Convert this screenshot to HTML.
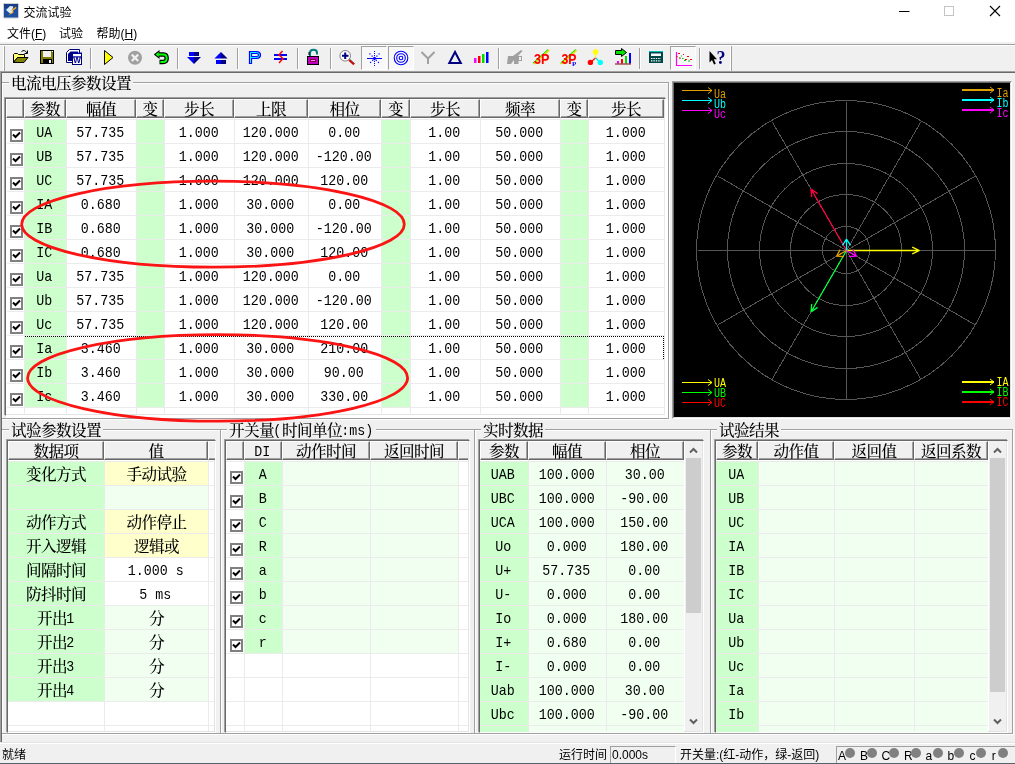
<!DOCTYPE html><html><head><meta charset="utf-8"><title>交流试验</title><style>
*{box-sizing:border-box;margin:0;padding:0}
html,body{width:1015px;height:764px;overflow:hidden;background:#f0f0f0}
body{position:relative;font-family:"Liberation Sans","Noto Sans CJK SC",sans-serif;font-size:12px;color:#000}
div,span,svg{position:absolute}
.ui{font-family:"Liberation Sans","Noto Sans CJK SC",sans-serif;font-size:12px;line-height:18px;white-space:nowrap}
.s{font-family:"Liberation Mono","Noto Serif CJK SC",monospace;font-size:15.6px;letter-spacing:-.6px;line-height:18px;white-space:nowrap;font-weight:500}
.c{text-align:center;font-family:"Liberation Mono","Noto Serif CJK SC",monospace;font-size:15.6px;letter-spacing:-.6px;line-height:18px;white-space:nowrap;font-weight:500;height:18px}
.c i,.s i{position:static;display:inline-block;font-style:normal;font-size:15px;letter-spacing:0;font-weight:400;transform:translate(-.7px,-1px) scaleX(.8889);transform-origin:50% 50%}
.s b{position:static;display:inline-block;font-weight:400;vertical-align:top;height:18px}
.s b i{transform-origin:0 50%}
.h{background:#f0f0f0;border:1px solid;border-color:#fff #696969 #696969 #fff;height:19px;box-shadow:inset -1px -1px 0 #a0a0a0}
.hx{border-right:0;box-shadow:inset 0 -1px 0 #a0a0a0}
.gb{border:1px solid #a0a0a0;box-shadow:1px 1px 0 #fff, inset 1px 1px 0 #fff}
.gt{background:#f0f0f0;padding:0 2px}
.grid{background:#fff;border:1px solid;border-color:#696969 #fff #fff #696969;box-shadow:-1px -1px 0 #a0a0a0,inset -1px -1px 0 #e3e3e3}
.hl{height:1px;background:#ebebeb}
.vl{width:1px;background:#ebebeb}
.cb{width:13px;height:13px;border:2px solid #808080;background:#fff}
.sep{width:2px;border-left:1px solid #a0a0a0;border-right:1px solid #fff;top:48px;height:21px}
.pr{top:46px;height:24px;border:1px solid;border-color:#a0a0a0 #fff #fff #a0a0a0;background:#f8f8f8}
.dot{width:10px;height:10px;border-radius:50%;background:#808080;top:748px}
</style></head><body><div id="root" style="left:0;top:0;width:1015px;height:764px;will-change:transform">
<div style="left:0px;top:0px;width:1015px;height:42px;background:#fff"></div>
<svg style="left:3px;top:3px" width="16" height="16" viewBox="3 3 16 16"><rect x="3.5" y="3.5" width="15" height="14.5" rx="1" fill="#1d4f9f" stroke="#cfcfd4"/><rect x="4" y="4" width="14" height="4" fill="#163f86"/><path d="M6 10 L10 6 L13.5 6.5 L12 10 L13 13 L10 13.5 Z" fill="#dfeaf8"/><path d="M16 6.5 L11 10.5 L12.8 11.2 L8 15.5 L14 12.2 L12 11.5 L16.5 8 Z" fill="#ffa41c"/><path d="M13 9.5 L11.5 10.8 L13 11.3 L10.5 13.5 L13.6 11.8 L12.6 11.3 Z" fill="#ffe45c"/></svg>
<div class="ui" style="left:23.5px;top:4px">交流试验</div>
<svg style="left:890px;top:0" width="125" height="24" viewBox="0 0 125 24"><path d="M9 11.5 H19.5" stroke="#000" stroke-width="1"/><rect x="54.5" y="6.5" width="9" height="9" fill="none" stroke="#c4c4c4"/><path d="M100 6 L110 16 M110 6 L100 16" stroke="#000" stroke-width="1.1"/></svg>
<div class="ui" style="left:7px;top:25px">文件(<u>F</u>)</div>
<div class="ui" style="left:59px;top:25px">试验</div>
<div class="ui" style="left:96.5px;top:25px">帮助(<u>H</u>)</div>
<div style="left:0px;top:44px;width:1015px;height:1px;background:#a0a0a0"></div>
<div style="left:0px;top:45px;width:1015px;height:1px;background:#fff"></div>
<div style="left:0px;top:71px;width:1015px;height:1px;background:#a0a0a0"></div>
<div style="left:1px;top:72px;width:1014px;height:1px;background:#696969"></div>
<div style="left:3px;top:46px;width:2px;height:25px;border-left:1px solid #fff;border-right:1px solid #a0a0a0"></div>
<div class="sep" style="left:90px"></div>
<div class="sep" style="left:177px"></div>
<div class="sep" style="left:237px"></div>
<div class="sep" style="left:297px"></div>
<div class="sep" style="left:330px"></div>
<div class="sep" style="left:498px"></div>
<div class="sep" style="left:639px"></div>
<div class="sep" style="left:699px"></div>
<div style="left:730px;top:46px;width:2px;height:25px;border-left:1px solid #fff;border-right:1px solid #a0a0a0"></div>
<div class="pr" style="left:361px;width:26px"></div>
<div class="pr" style="left:388px;width:26px"></div>
<div class="pr" style="left:670px;width:26px"></div>
<svg style="left:0;top:44px" width="1015" height="28" viewBox="0 44 1015 28" font-family="Liberation Sans, sans-serif">
<!-- open -->
<path d="M13.5 62.5 V54.5 L14.5 53.5 H17.5 L18.5 54.5 H24.5 V57.5 H17.5 Z" fill="#ffff70" stroke="#000"/>
<path d="M13.5 62.5 L17.5 57.5 H28 L24 62.5 Z" fill="#808000" stroke="#000"/>
<path d="M21.5 51.5 Q24.5 49 27 53 M27.5 50.5 V53.5 H24.5" fill="none" stroke="#000"/>
<!-- save -->
<rect x="40.5" y="50.5" width="13" height="13" fill="#808000" stroke="#000"/>
<rect x="43" y="51" width="8" height="6" fill="#f0f0f0"/>
<rect x="43" y="59" width="9" height="5" fill="#000"/>
<rect x="49" y="60" width="2" height="3" fill="#f0f0f0"/>
<rect x="52" y="51" width="1" height="1" fill="#fff"/>
<!-- word -->
<path d="M66.5 52.5 L69.5 49.5 H79.5 V62.5 H66.5 Z" fill="#fff" stroke="#000078"/>
<path d="M68 54 L70.500 51.500 H78 V61 H68 Z" fill="#000084"/>
<rect x="72.500" y="53.500" width="9" height="11" fill="#fff" stroke="#000078"/>
<rect x="72" y="52.500" width="10" height="1.500" fill="#0000a0"/>
<rect x="73" y="56.300" width="8" height="1.200" fill="#0000a0"/>
<text x="73.200" y="63" font-size="8.500" font-weight="bold" fill="#000090" textLength="7.600" lengthAdjust="spacingAndGlyphs">W</text>
<!-- play -->
<path d="M104.5 50.5 L113 57.5 L104.5 64.5 Z" fill="#ffff00" stroke="#000" stroke-width="1"/>
<!-- stop -->
<circle cx="135" cy="57.8" r="7" fill="#a0a0a0"/>
<path d="M131.8 54.6 L138.2 61 M138.2 54.6 L131.8 61" stroke="#f0f0f0" stroke-width="2.2"/>
<!-- undo -->
<path d="M158 54.5 H163.5 Q166.7 54.5 166.7 58.3 Q166.7 62 163 62 H159.5" fill="none" stroke="#000" stroke-width="4.4"/>
<path d="M153.8 54.5 L159.5 50 V59 Z" fill="#000"/>
<path d="M157 54.5 H163.5 Q166.7 54.5 166.7 58.3 Q166.7 62 163 62 H160.3" fill="none" stroke="#00ff00" stroke-width="2"/>
<path d="M155.6 54.5 L158.8 52 V57 Z" fill="#00ff00"/>
<!-- down -->
<rect x="189" y="52" width="5" height="4" fill="#0000ff"/><rect x="194" y="52" width="5" height="4" fill="#000080"/>
<path d="M187 57 H194 V64 Z" fill="#0000ff"/><path d="M194 57 H201 L194 64 Z" fill="#000080"/>
<!-- up -->
<path d="M221 52 V58.6 H214.4 Z" fill="#0000ff"/><path d="M221 52 L227.6 58.6 H221 Z" fill="#000080"/>
<rect x="216" y="60" width="5" height="4" fill="#0000ff"/><rect x="221" y="60" width="5" height="4" fill="#000080"/>
<rect x="221" y="60" width="5" height="1.5" fill="#000080"/>
<!-- P -->
<path d="M250.5 64 V52.5 H256.5 Q259.5 52.5 259.5 55 Q259.5 57.5 256.5 57.5 H251" fill="none" stroke="#0000ff" stroke-width="3.2"/>
<path d="M250.5 63 V52.5 H256.5 Q259.5 52.5 259.5 55 Q259.5 57.5 256.5 57.5 H251" fill="none" stroke="#00ffff" stroke-width="1"/>
<!-- neq -->
<rect x="274" y="54" width="13" height="2" fill="#0000ff"/><rect x="274" y="58" width="13" height="2" fill="#0000ff"/>
<path d="M282.5 51 L279 55 L283 58.5 L279 63" fill="none" stroke="#ff0000" stroke-width="1.5"/>
<!-- lock -->
<path d="M310 56 V53 Q310 49.8 313.5 49.8 Q317 49.8 317 53 V54.5" fill="none" stroke="#008080" stroke-width="2"/>
<path d="M309 52 V55" stroke="#000" stroke-width="1"/>
<rect x="307.5" y="56.5" width="11" height="8" fill="#c000c0" stroke="#000"/>
<rect x="310" y="59" width="6" height="3" fill="#800040"/>
<rect x="311" y="60" width="4" height="1" fill="#ff80ff"/>
<!-- magnifier -->
<circle cx="345.2" cy="55.8" r="5.3" fill="#fff" stroke="#808080"/>
<path d="M342 55.8 H348.5 M345.2 52.5 V59" stroke="#000080" stroke-width="2"/>
<path d="M349 60 L354 64.5" stroke="#e00000" stroke-width="1.8"/>
<path d="M349.5 59 L354.8 63.8" stroke="#404040" stroke-width=".8"/>
<!-- star -->
<path d="M367 58.5 H382" stroke="#0000ff" stroke-width="1"/>
<path d="M374.5 51 V66" stroke="#0000ff" stroke-width="1" stroke-dasharray="1 1"/>
<path d="M369.5 53.5 L379.5 63.5 M379.5 53.5 L369.5 63.5" stroke="#0000ff" stroke-width="1.2" stroke-dasharray="1.2 1.8"/>
<circle cx="374.5" cy="58.5" r="1.3" fill="none" stroke="#0000ff" stroke-width=".8"/>
<!-- circles -->
<circle cx="401" cy="58" r="6.8" fill="none" stroke="#0000ff" stroke-width="1.1"/>
<circle cx="401" cy="58" r="4.3" fill="none" stroke="#0000ff" stroke-width="1.1"/>
<circle cx="401" cy="58" r="1.8" fill="none" stroke="#0000ff" stroke-width="1.1"/>
<!-- Y -->
<path d="M421.5 52 L428 58.5 L434.5 52 M428 58.5 V64" fill="none" stroke="#a0a0a0" stroke-width="2"/>
<!-- delta -->
<path d="M455 52 L449.3 63 H460.8 Z" fill="none" stroke="#000080" stroke-width="2"/>
<!-- bars -->
<rect x="474" y="58" width="2.5" height="5" fill="#ff00ff"/><rect x="478" y="56" width="2.5" height="7" fill="#ff0000"/>
<rect x="482" y="54" width="2.5" height="9" fill="#00e000"/><rect x="486" y="52" width="2.5" height="11" fill="#0000ff"/>
<!-- gray disabled -->
<path d="M508 56 H513 L521 50 L522.5 51 L518 56 H522 V61 H518.5 V64 H514 V60 L511 64 H507 Z" fill="#a0a0a0"/>
<rect x="519" y="57" width="2" height="3" fill="#f0f0f0"/>
<!-- 3P -->
<path d="M533.5 64 L549 50" stroke="#e0e000" stroke-width="2"/><path d="M533 63 L548 49.5" stroke="#00e000" stroke-width="1"/>
<text x="534" y="63.5" font-size="14.5" font-weight="bold" fill="#ff0000" textLength="15.5" lengthAdjust="spacingAndGlyphs">3P</text>
<path d="M561 64 L576.5 50" stroke="#e0e000" stroke-width="2"/><path d="M560.5 63 L575.5 49.5" stroke="#00e000" stroke-width="1"/>
<text x="561.5" y="63.5" font-size="14.5" font-weight="bold" fill="#ff0000" textLength="15" lengthAdjust="spacingAndGlyphs">3P</text>
<text x="572" y="66" font-size="7" font-weight="bold" fill="#0000ff" font-family="Liberation Serif, serif">P</text>
<!-- molecule -->
<path d="M595.6 52 V58" stroke="#ffff00" stroke-width="1.2"/><path d="M595.6 58 L590.4 62.4" stroke="#ff0000" stroke-width="1.2"/><path d="M595.6 58 L600.3 62.4" stroke="#00e0e0" stroke-width="1.2"/>
<circle cx="595.6" cy="52" r="2.7" fill="#ffff00"/><circle cx="590.4" cy="62.4" r="2.7" fill="#ff0000"/><circle cx="600.3" cy="62.4" r="2.7" fill="#00ffff"/>
<!-- bars with arrow -->
<path d="M615.5 50.5 H621.5 V48.5 L626.5 52.5 L621.5 56.5 V54.5 H615.5 Z" fill="#00e000" stroke="#000"/>
<rect x="617" y="61" width="2" height="2.5" fill="#ff00ff"/><rect x="621" y="59" width="2" height="4.5" fill="#ff0000"/>
<rect x="625" y="56" width="2" height="7.5" fill="#00e000"/><rect x="629" y="53" width="2" height="10.5" fill="#0000ff"/>
<rect x="615" y="63.5" width="16" height="1" fill="#800000"/>
<!-- calc -->
<rect x="649" y="51" width="14" height="12" fill="#004848"/>
<rect x="649" y="51" width="14" height="1" fill="#00c0c0"/>
<rect x="651" y="53.5" width="10" height="2.5" fill="#fff"/>
<path d="M651 58.5 H661 M651 60.8 H661" stroke="#fff" stroke-width="1.2" stroke-dasharray="1.4 1"/>
<!-- chart -->
<path d="M676.5 52 V65.5 H692" fill="none" stroke="#ff00ff" stroke-width="1.2"/>
<path d="M678 53.5 H680 M683 54.5 H684 M687 56.5 H689 M685 59.5 H687 M690 59.5 H692 M677 56 V57.5 M680 57.5 V59" stroke="#ff0000" stroke-width="1"/>
<path d="M679 58 H680.5 M682 58.5 H683.5 M684 60.5 H686 M688 61 H690 M681 56 H682" stroke="#00c000" stroke-width="1"/>
<!-- help pointer -->
<path d="M709.5 51 V62.5 L712 60 L714 64.5 L715.8 63.7 L713.8 59.3 H717 Z" fill="#000"/>
<text x="716.5" y="64" font-size="18" font-weight="bold" fill="#000080" font-family="Liberation Serif, serif">?</text>
</svg>

<div class="gb" style="left:1px;top:82px;width:668px;height:337px;"></div>
<div class="s gt" style="left:9px;top:76px">电流电压参数设置</div>
<div class="gb" style="left:1px;top:429px;width:220px;height:305px;"></div>
<div class="s gt" style="left:9px;top:423px">试验参数设置</div>
<div class="gb" style="left:220px;top:429px;width:255px;height:305px;"></div>
<div class="s gt" style="left:227px;top:423px">开关量<b style="width:8px"><i>(</i></b>时间单位<b style="width:32px"><i>:ms)</i></b></div>
<div class="gb" style="left:474px;top:429px;width:237px;height:305px;"></div>
<div class="s gt" style="left:481px;top:423px">实时数据</div>
<div class="gb" style="left:710px;top:429px;width:303px;height:305px;"></div>
<div class="s gt" style="left:717px;top:423px">试验结果</div>
<div style="left:0px;top:72px;width:1px;height:671px;background:#a0a0a0"></div>
<div style="left:1px;top:72px;width:1px;height:671px;background:#696969"></div>
<div style="left:6px;top:99px;width:662px;height:319px;background:#fff"></div>
<div class="grid" style="left:5px;top:98px;width:661px;height:318px;"></div>
<div class="h c" style="left:6px;top:99px;width:18px;line-height:22px"></div>
<div class="h c" style="left:24px;top:99px;width:42px;line-height:22px">参数</div>
<div class="h c" style="left:66px;top:99px;width:70px;line-height:22px">幅值</div>
<div class="h c" style="left:136px;top:99px;width:28px;line-height:22px">变</div>
<div class="h c" style="left:164px;top:99px;width:70px;line-height:22px">步长</div>
<div class="h c" style="left:234px;top:99px;width:74px;line-height:22px">上限</div>
<div class="h c" style="left:308px;top:99px;width:73px;line-height:22px">相位</div>
<div class="h c" style="left:381px;top:99px;width:29px;line-height:22px">变</div>
<div class="h c" style="left:410px;top:99px;width:70px;line-height:22px">步长</div>
<div class="h c" style="left:480px;top:99px;width:80px;line-height:22px">频率</div>
<div class="h c" style="left:560px;top:99px;width:28px;line-height:22px">变</div>
<div class="h c" style="left:588px;top:99px;width:76px;line-height:22px">步长</div>
<div style="left:25px;top:120px;width:41px;height:287px;background:#ccffcc"></div>
<div style="left:137px;top:120px;width:27px;height:287px;background:#ccffcc"></div>
<div style="left:382px;top:120px;width:28px;height:287px;background:#ccffcc"></div>
<div style="left:561px;top:120px;width:27px;height:287px;background:#ccffcc"></div>
<div class="hl" style="left:7px;top:119px;width:657px;height:1px;"></div>
<div class="hl" style="left:7px;top:143px;width:657px;height:1px;"></div>
<div class="hl" style="left:7px;top:167px;width:657px;height:1px;"></div>
<div class="hl" style="left:7px;top:191px;width:657px;height:1px;"></div>
<div class="hl" style="left:7px;top:215px;width:657px;height:1px;"></div>
<div class="hl" style="left:7px;top:239px;width:657px;height:1px;"></div>
<div class="hl" style="left:7px;top:263px;width:657px;height:1px;"></div>
<div class="hl" style="left:7px;top:287px;width:657px;height:1px;"></div>
<div class="hl" style="left:7px;top:311px;width:657px;height:1px;"></div>
<div class="hl" style="left:7px;top:335px;width:657px;height:1px;"></div>
<div class="hl" style="left:7px;top:359px;width:657px;height:1px;"></div>
<div class="hl" style="left:7px;top:383px;width:657px;height:1px;"></div>
<div class="hl" style="left:7px;top:407px;width:657px;height:1px;"></div>
<div class="vl" style="left:24px;top:118px;width:1px;height:297px;"></div>
<div class="vl" style="left:66px;top:118px;width:1px;height:297px;"></div>
<div class="vl" style="left:136px;top:118px;width:1px;height:297px;"></div>
<div class="vl" style="left:164px;top:118px;width:1px;height:297px;"></div>
<div class="vl" style="left:234px;top:118px;width:1px;height:297px;"></div>
<div class="vl" style="left:308px;top:118px;width:1px;height:297px;"></div>
<div class="vl" style="left:381px;top:118px;width:1px;height:297px;"></div>
<div class="vl" style="left:410px;top:118px;width:1px;height:297px;"></div>
<div class="vl" style="left:480px;top:118px;width:1px;height:297px;"></div>
<div class="vl" style="left:560px;top:118px;width:1px;height:297px;"></div>
<div class="vl" style="left:588px;top:118px;width:1px;height:297px;"></div>
<div class="vl" style="left:664px;top:118px;width:1px;height:297px;"></div>
<div class="cb" style="left:10px;top:129px"><svg style="left:0;top:0" width="9" height="9" viewBox="0 0 9 9"><path d="M1 3.5 L3.5 6 L8 1.5" stroke="#000" stroke-width="2" fill="none"/></svg></div>
<div class="c" style="left:25px;top:125px;width:41px"><i>UA</i></div>
<div class="c" style="left:67px;top:125px;width:69px"><i>57.735</i></div>
<div class="c" style="left:165px;top:125px;width:69px"><i>1.000</i></div>
<div class="c" style="left:235px;top:125px;width:73px"><i>120.000</i></div>
<div class="c" style="left:309px;top:125px;width:72px"><i>0.00</i></div>
<div class="c" style="left:411px;top:125px;width:69px"><i>1.00</i></div>
<div class="c" style="left:481px;top:125px;width:79px"><i>50.000</i></div>
<div class="c" style="left:589px;top:125px;width:75px"><i>1.000</i></div>
<div class="cb" style="left:10px;top:153px"><svg style="left:0;top:0" width="9" height="9" viewBox="0 0 9 9"><path d="M1 3.5 L3.5 6 L8 1.5" stroke="#000" stroke-width="2" fill="none"/></svg></div>
<div class="c" style="left:25px;top:149px;width:41px"><i>UB</i></div>
<div class="c" style="left:67px;top:149px;width:69px"><i>57.735</i></div>
<div class="c" style="left:165px;top:149px;width:69px"><i>1.000</i></div>
<div class="c" style="left:235px;top:149px;width:73px"><i>120.000</i></div>
<div class="c" style="left:309px;top:149px;width:72px"><i>-120.00</i></div>
<div class="c" style="left:411px;top:149px;width:69px"><i>1.00</i></div>
<div class="c" style="left:481px;top:149px;width:79px"><i>50.000</i></div>
<div class="c" style="left:589px;top:149px;width:75px"><i>1.000</i></div>
<div class="cb" style="left:10px;top:177px"><svg style="left:0;top:0" width="9" height="9" viewBox="0 0 9 9"><path d="M1 3.5 L3.5 6 L8 1.5" stroke="#000" stroke-width="2" fill="none"/></svg></div>
<div class="c" style="left:25px;top:173px;width:41px"><i>UC</i></div>
<div class="c" style="left:67px;top:173px;width:69px"><i>57.735</i></div>
<div class="c" style="left:165px;top:173px;width:69px"><i>1.000</i></div>
<div class="c" style="left:235px;top:173px;width:73px"><i>120.000</i></div>
<div class="c" style="left:309px;top:173px;width:72px"><i>120.00</i></div>
<div class="c" style="left:411px;top:173px;width:69px"><i>1.00</i></div>
<div class="c" style="left:481px;top:173px;width:79px"><i>50.000</i></div>
<div class="c" style="left:589px;top:173px;width:75px"><i>1.000</i></div>
<div class="cb" style="left:10px;top:201px"><svg style="left:0;top:0" width="9" height="9" viewBox="0 0 9 9"><path d="M1 3.5 L3.5 6 L8 1.5" stroke="#000" stroke-width="2" fill="none"/></svg></div>
<div class="c" style="left:25px;top:197px;width:41px"><i>IA</i></div>
<div class="c" style="left:67px;top:197px;width:69px"><i>0.680</i></div>
<div class="c" style="left:165px;top:197px;width:69px"><i>1.000</i></div>
<div class="c" style="left:235px;top:197px;width:73px"><i>30.000</i></div>
<div class="c" style="left:309px;top:197px;width:72px"><i>0.00</i></div>
<div class="c" style="left:411px;top:197px;width:69px"><i>1.00</i></div>
<div class="c" style="left:481px;top:197px;width:79px"><i>50.000</i></div>
<div class="c" style="left:589px;top:197px;width:75px"><i>1.000</i></div>
<div class="cb" style="left:10px;top:225px"><svg style="left:0;top:0" width="9" height="9" viewBox="0 0 9 9"><path d="M1 3.5 L3.5 6 L8 1.5" stroke="#000" stroke-width="2" fill="none"/></svg></div>
<div class="c" style="left:25px;top:221px;width:41px"><i>IB</i></div>
<div class="c" style="left:67px;top:221px;width:69px"><i>0.680</i></div>
<div class="c" style="left:165px;top:221px;width:69px"><i>1.000</i></div>
<div class="c" style="left:235px;top:221px;width:73px"><i>30.000</i></div>
<div class="c" style="left:309px;top:221px;width:72px"><i>-120.00</i></div>
<div class="c" style="left:411px;top:221px;width:69px"><i>1.00</i></div>
<div class="c" style="left:481px;top:221px;width:79px"><i>50.000</i></div>
<div class="c" style="left:589px;top:221px;width:75px"><i>1.000</i></div>
<div class="cb" style="left:10px;top:249px"><svg style="left:0;top:0" width="9" height="9" viewBox="0 0 9 9"><path d="M1 3.5 L3.5 6 L8 1.5" stroke="#000" stroke-width="2" fill="none"/></svg></div>
<div class="c" style="left:25px;top:245px;width:41px"><i>IC</i></div>
<div class="c" style="left:67px;top:245px;width:69px"><i>0.680</i></div>
<div class="c" style="left:165px;top:245px;width:69px"><i>1.000</i></div>
<div class="c" style="left:235px;top:245px;width:73px"><i>30.000</i></div>
<div class="c" style="left:309px;top:245px;width:72px"><i>120.00</i></div>
<div class="c" style="left:411px;top:245px;width:69px"><i>1.00</i></div>
<div class="c" style="left:481px;top:245px;width:79px"><i>50.000</i></div>
<div class="c" style="left:589px;top:245px;width:75px"><i>1.000</i></div>
<div class="cb" style="left:10px;top:273px"><svg style="left:0;top:0" width="9" height="9" viewBox="0 0 9 9"><path d="M1 3.5 L3.5 6 L8 1.5" stroke="#000" stroke-width="2" fill="none"/></svg></div>
<div class="c" style="left:25px;top:269px;width:41px"><i>Ua</i></div>
<div class="c" style="left:67px;top:269px;width:69px"><i>57.735</i></div>
<div class="c" style="left:165px;top:269px;width:69px"><i>1.000</i></div>
<div class="c" style="left:235px;top:269px;width:73px"><i>120.000</i></div>
<div class="c" style="left:309px;top:269px;width:72px"><i>0.00</i></div>
<div class="c" style="left:411px;top:269px;width:69px"><i>1.00</i></div>
<div class="c" style="left:481px;top:269px;width:79px"><i>50.000</i></div>
<div class="c" style="left:589px;top:269px;width:75px"><i>1.000</i></div>
<div class="cb" style="left:10px;top:297px"><svg style="left:0;top:0" width="9" height="9" viewBox="0 0 9 9"><path d="M1 3.5 L3.5 6 L8 1.5" stroke="#000" stroke-width="2" fill="none"/></svg></div>
<div class="c" style="left:25px;top:293px;width:41px"><i>Ub</i></div>
<div class="c" style="left:67px;top:293px;width:69px"><i>57.735</i></div>
<div class="c" style="left:165px;top:293px;width:69px"><i>1.000</i></div>
<div class="c" style="left:235px;top:293px;width:73px"><i>120.000</i></div>
<div class="c" style="left:309px;top:293px;width:72px"><i>-120.00</i></div>
<div class="c" style="left:411px;top:293px;width:69px"><i>1.00</i></div>
<div class="c" style="left:481px;top:293px;width:79px"><i>50.000</i></div>
<div class="c" style="left:589px;top:293px;width:75px"><i>1.000</i></div>
<div class="cb" style="left:10px;top:321px"><svg style="left:0;top:0" width="9" height="9" viewBox="0 0 9 9"><path d="M1 3.5 L3.5 6 L8 1.5" stroke="#000" stroke-width="2" fill="none"/></svg></div>
<div class="c" style="left:25px;top:317px;width:41px"><i>Uc</i></div>
<div class="c" style="left:67px;top:317px;width:69px"><i>57.735</i></div>
<div class="c" style="left:165px;top:317px;width:69px"><i>1.000</i></div>
<div class="c" style="left:235px;top:317px;width:73px"><i>120.000</i></div>
<div class="c" style="left:309px;top:317px;width:72px"><i>120.00</i></div>
<div class="c" style="left:411px;top:317px;width:69px"><i>1.00</i></div>
<div class="c" style="left:481px;top:317px;width:79px"><i>50.000</i></div>
<div class="c" style="left:589px;top:317px;width:75px"><i>1.000</i></div>
<div class="cb" style="left:10px;top:345px"><svg style="left:0;top:0" width="9" height="9" viewBox="0 0 9 9"><path d="M1 3.5 L3.5 6 L8 1.5" stroke="#000" stroke-width="2" fill="none"/></svg></div>
<div class="c" style="left:25px;top:341px;width:41px"><i>Ia</i></div>
<div class="c" style="left:67px;top:341px;width:69px"><i>3.460</i></div>
<div class="c" style="left:165px;top:341px;width:69px"><i>1.000</i></div>
<div class="c" style="left:235px;top:341px;width:73px"><i>30.000</i></div>
<div class="c" style="left:309px;top:341px;width:72px"><i>210.00</i></div>
<div class="c" style="left:411px;top:341px;width:69px"><i>1.00</i></div>
<div class="c" style="left:481px;top:341px;width:79px"><i>50.000</i></div>
<div class="c" style="left:589px;top:341px;width:75px"><i>1.000</i></div>
<div class="cb" style="left:10px;top:369px"><svg style="left:0;top:0" width="9" height="9" viewBox="0 0 9 9"><path d="M1 3.5 L3.5 6 L8 1.5" stroke="#000" stroke-width="2" fill="none"/></svg></div>
<div class="c" style="left:25px;top:365px;width:41px"><i>Ib</i></div>
<div class="c" style="left:67px;top:365px;width:69px"><i>3.460</i></div>
<div class="c" style="left:165px;top:365px;width:69px"><i>1.000</i></div>
<div class="c" style="left:235px;top:365px;width:73px"><i>30.000</i></div>
<div class="c" style="left:309px;top:365px;width:72px"><i>90.00</i></div>
<div class="c" style="left:411px;top:365px;width:69px"><i>1.00</i></div>
<div class="c" style="left:481px;top:365px;width:79px"><i>50.000</i></div>
<div class="c" style="left:589px;top:365px;width:75px"><i>1.000</i></div>
<div class="cb" style="left:10px;top:393px"><svg style="left:0;top:0" width="9" height="9" viewBox="0 0 9 9"><path d="M1 3.5 L3.5 6 L8 1.5" stroke="#000" stroke-width="2" fill="none"/></svg></div>
<div class="c" style="left:25px;top:389px;width:41px"><i>Ic</i></div>
<div class="c" style="left:67px;top:389px;width:69px"><i>3.460</i></div>
<div class="c" style="left:165px;top:389px;width:69px"><i>1.000</i></div>
<div class="c" style="left:235px;top:389px;width:73px"><i>30.000</i></div>
<div class="c" style="left:309px;top:389px;width:72px"><i>330.00</i></div>
<div class="c" style="left:411px;top:389px;width:69px"><i>1.00</i></div>
<div class="c" style="left:481px;top:389px;width:79px"><i>50.000</i></div>
<div class="c" style="left:589px;top:389px;width:75px"><i>1.000</i></div>
<div style="left:25px;top:336px;width:639px;height:1px;background:repeating-linear-gradient(90deg,#000 0 1px,transparent 1px 2px)"></div>
<div style="left:663px;top:336px;width:1px;height:23px;background:repeating-linear-gradient(180deg,#000 0 1px,transparent 1px 2px)"></div>
<div class="grid" style="left:7px;top:440px;width:209px;height:293px;"></div>
<div class="h c" style="left:8px;top:441px;width:96px;line-height:22px">数据项</div>
<div class="h c" style="left:104px;top:441px;width:104px;line-height:22px">值</div>
<div class="h c hx" style="left:208px;top:441px;width:7px;line-height:22px"></div>
<div style="left:8px;top:462px;width:96px;height:239px;background:#ccffcc"></div>
<div style="left:105px;top:462px;width:103px;height:23px;background:#ffffcc"></div>
<div style="left:105px;top:486px;width:103px;height:23px;background:#f0fff0"></div>
<div style="left:105px;top:510px;width:103px;height:23px;background:#ffffcc"></div>
<div style="left:105px;top:534px;width:103px;height:23px;background:#ffffcc"></div>
<div style="left:105px;top:606px;width:103px;height:23px;background:#f0fff0"></div>
<div style="left:105px;top:630px;width:103px;height:23px;background:#f0fff0"></div>
<div style="left:105px;top:654px;width:103px;height:23px;background:#f0fff0"></div>
<div style="left:105px;top:678px;width:103px;height:23px;background:#f0fff0"></div>
<div class="hl" style="left:8px;top:461px;width:206px;height:1px;"></div>
<div class="hl" style="left:8px;top:485px;width:206px;height:1px;"></div>
<div class="hl" style="left:8px;top:509px;width:206px;height:1px;"></div>
<div class="hl" style="left:8px;top:533px;width:206px;height:1px;"></div>
<div class="hl" style="left:8px;top:557px;width:206px;height:1px;"></div>
<div class="hl" style="left:8px;top:581px;width:206px;height:1px;"></div>
<div class="hl" style="left:8px;top:605px;width:206px;height:1px;"></div>
<div class="hl" style="left:8px;top:629px;width:206px;height:1px;"></div>
<div class="hl" style="left:8px;top:653px;width:206px;height:1px;"></div>
<div class="hl" style="left:8px;top:677px;width:206px;height:1px;"></div>
<div class="hl" style="left:8px;top:701px;width:206px;height:1px;"></div>
<div class="hl" style="left:8px;top:725px;width:206px;height:1px;"></div>
<div class="vl" style="left:104px;top:460px;width:1px;height:271px;"></div>
<div class="vl" style="left:208px;top:460px;width:1px;height:271px;"></div>
<div class="c" style="left:8px;top:467px;width:96px">变化方式</div>
<div class="c" style="left:105px;top:467px;width:103px">手动试验</div>
<div class="c" style="left:8px;top:515px;width:96px">动作方式</div>
<div class="c" style="left:105px;top:515px;width:103px">动作停止</div>
<div class="c" style="left:8px;top:539px;width:96px">开入逻辑</div>
<div class="c" style="left:105px;top:539px;width:103px">逻辑或</div>
<div class="c" style="left:8px;top:563px;width:96px">间隔时间</div>
<div class="c" style="left:105px;top:563px;width:103px"><i>1.000 s</i></div>
<div class="c" style="left:8px;top:587px;width:96px">防抖时间</div>
<div class="c" style="left:105px;top:587px;width:103px"><i>5 ms</i></div>
<div class="c s" style="left:8px;top:611px;width:96px">开出<b style="width:8px"><i>1</i></b></div>
<div class="c" style="left:105px;top:611px;width:103px">分</div>
<div class="c s" style="left:8px;top:635px;width:96px">开出<b style="width:8px"><i>2</i></b></div>
<div class="c" style="left:105px;top:635px;width:103px">分</div>
<div class="c s" style="left:8px;top:659px;width:96px">开出<b style="width:8px"><i>3</i></b></div>
<div class="c" style="left:105px;top:659px;width:103px">分</div>
<div class="c s" style="left:8px;top:683px;width:96px">开出<b style="width:8px"><i>4</i></b></div>
<div class="c" style="left:105px;top:683px;width:103px">分</div>
<div class="grid" style="left:225px;top:440px;width:245px;height:293px;"></div>
<div class="h c" style="left:226px;top:441px;width:18px;line-height:22px"></div>
<div class="h c" style="left:244px;top:441px;width:38px;line-height:22px"><i>DI</i></div>
<div class="h c" style="left:282px;top:441px;width:88px;line-height:22px">动作时间</div>
<div class="h c" style="left:370px;top:441px;width:88px;line-height:22px">返回时间</div>
<div class="h c hx" style="left:458px;top:441px;width:10px;line-height:22px"></div>
<div style="left:245px;top:462px;width:37px;height:191px;background:#ccffcc"></div>
<div style="left:283px;top:462px;width:175px;height:191px;background:#f0fff0"></div>
<div class="hl" style="left:226px;top:461px;width:242px;height:1px;"></div>
<div class="hl" style="left:226px;top:485px;width:242px;height:1px;"></div>
<div class="hl" style="left:226px;top:509px;width:242px;height:1px;"></div>
<div class="hl" style="left:226px;top:533px;width:242px;height:1px;"></div>
<div class="hl" style="left:226px;top:557px;width:242px;height:1px;"></div>
<div class="hl" style="left:226px;top:581px;width:242px;height:1px;"></div>
<div class="hl" style="left:226px;top:605px;width:242px;height:1px;"></div>
<div class="hl" style="left:226px;top:629px;width:242px;height:1px;"></div>
<div class="hl" style="left:226px;top:653px;width:242px;height:1px;"></div>
<div class="hl" style="left:226px;top:677px;width:242px;height:1px;"></div>
<div class="hl" style="left:226px;top:701px;width:242px;height:1px;"></div>
<div class="hl" style="left:226px;top:725px;width:242px;height:1px;"></div>
<div class="vl" style="left:244px;top:460px;width:1px;height:271px;"></div>
<div class="vl" style="left:282px;top:460px;width:1px;height:271px;"></div>
<div class="vl" style="left:370px;top:460px;width:1px;height:271px;"></div>
<div class="vl" style="left:458px;top:460px;width:1px;height:271px;"></div>
<div class="c" style="left:245px;top:467px;width:37px"><i>A</i></div>
<div class="cb" style="left:230px;top:471px"><svg style="left:0;top:0" width="9" height="9" viewBox="0 0 9 9"><path d="M1 3.5 L3.5 6 L8 1.5" stroke="#000" stroke-width="2" fill="none"/></svg></div>
<div class="c" style="left:245px;top:491px;width:37px"><i>B</i></div>
<div class="cb" style="left:230px;top:495px"><svg style="left:0;top:0" width="9" height="9" viewBox="0 0 9 9"><path d="M1 3.5 L3.5 6 L8 1.5" stroke="#000" stroke-width="2" fill="none"/></svg></div>
<div class="c" style="left:245px;top:515px;width:37px"><i>C</i></div>
<div class="cb" style="left:230px;top:519px"><svg style="left:0;top:0" width="9" height="9" viewBox="0 0 9 9"><path d="M1 3.5 L3.5 6 L8 1.5" stroke="#000" stroke-width="2" fill="none"/></svg></div>
<div class="c" style="left:245px;top:539px;width:37px"><i>R</i></div>
<div class="cb" style="left:230px;top:543px"><svg style="left:0;top:0" width="9" height="9" viewBox="0 0 9 9"><path d="M1 3.5 L3.5 6 L8 1.5" stroke="#000" stroke-width="2" fill="none"/></svg></div>
<div class="c" style="left:245px;top:563px;width:37px"><i>a</i></div>
<div class="cb" style="left:230px;top:567px"><svg style="left:0;top:0" width="9" height="9" viewBox="0 0 9 9"><path d="M1 3.5 L3.5 6 L8 1.5" stroke="#000" stroke-width="2" fill="none"/></svg></div>
<div class="c" style="left:245px;top:587px;width:37px"><i>b</i></div>
<div class="cb" style="left:230px;top:591px"><svg style="left:0;top:0" width="9" height="9" viewBox="0 0 9 9"><path d="M1 3.5 L3.5 6 L8 1.5" stroke="#000" stroke-width="2" fill="none"/></svg></div>
<div class="c" style="left:245px;top:611px;width:37px"><i>c</i></div>
<div class="cb" style="left:230px;top:615px"><svg style="left:0;top:0" width="9" height="9" viewBox="0 0 9 9"><path d="M1 3.5 L3.5 6 L8 1.5" stroke="#000" stroke-width="2" fill="none"/></svg></div>
<div class="c" style="left:245px;top:635px;width:37px"><i>r</i></div>
<div class="cb" style="left:230px;top:639px"><svg style="left:0;top:0" width="9" height="9" viewBox="0 0 9 9"><path d="M1 3.5 L3.5 6 L8 1.5" stroke="#000" stroke-width="2" fill="none"/></svg></div>
<div class="grid" style="left:479px;top:440px;width:225px;height:293px;"></div>
<div class="h c" style="left:480px;top:441px;width:48px;line-height:22px">参数</div>
<div class="h c" style="left:528px;top:441px;width:78px;line-height:22px">幅值</div>
<div class="h c" style="left:606px;top:441px;width:78px;line-height:22px">相位</div>
<div style="left:480px;top:462px;width:48px;height:270px;background:#ccffcc"></div>
<div style="left:529px;top:462px;width:155px;height:270px;background:#f0fff0"></div>
<div class="hl" style="left:480px;top:461px;width:204px;height:1px;"></div>
<div class="hl" style="left:480px;top:485px;width:204px;height:1px;"></div>
<div class="hl" style="left:480px;top:509px;width:204px;height:1px;"></div>
<div class="hl" style="left:480px;top:533px;width:204px;height:1px;"></div>
<div class="hl" style="left:480px;top:557px;width:204px;height:1px;"></div>
<div class="hl" style="left:480px;top:581px;width:204px;height:1px;"></div>
<div class="hl" style="left:480px;top:605px;width:204px;height:1px;"></div>
<div class="hl" style="left:480px;top:629px;width:204px;height:1px;"></div>
<div class="hl" style="left:480px;top:653px;width:204px;height:1px;"></div>
<div class="hl" style="left:480px;top:677px;width:204px;height:1px;"></div>
<div class="hl" style="left:480px;top:701px;width:204px;height:1px;"></div>
<div class="hl" style="left:480px;top:725px;width:204px;height:1px;"></div>
<div class="vl" style="left:528px;top:460px;width:1px;height:271px;"></div>
<div class="vl" style="left:606px;top:460px;width:1px;height:271px;"></div>
<div class="c" style="left:480px;top:467px;width:48px"><i>UAB</i></div>
<div class="c" style="left:529px;top:467px;width:77px"><i>100.000</i></div>
<div class="c" style="left:607px;top:467px;width:77px"><i>30.00</i></div>
<div class="c" style="left:480px;top:491px;width:48px"><i>UBC</i></div>
<div class="c" style="left:529px;top:491px;width:77px"><i>100.000</i></div>
<div class="c" style="left:607px;top:491px;width:77px"><i>-90.00</i></div>
<div class="c" style="left:480px;top:515px;width:48px"><i>UCA</i></div>
<div class="c" style="left:529px;top:515px;width:77px"><i>100.000</i></div>
<div class="c" style="left:607px;top:515px;width:77px"><i>150.00</i></div>
<div class="c" style="left:480px;top:539px;width:48px"><i>Uo</i></div>
<div class="c" style="left:529px;top:539px;width:77px"><i>0.000</i></div>
<div class="c" style="left:607px;top:539px;width:77px"><i>180.00</i></div>
<div class="c" style="left:480px;top:563px;width:48px"><i>U+</i></div>
<div class="c" style="left:529px;top:563px;width:77px"><i>57.735</i></div>
<div class="c" style="left:607px;top:563px;width:77px"><i>0.00</i></div>
<div class="c" style="left:480px;top:587px;width:48px"><i>U-</i></div>
<div class="c" style="left:529px;top:587px;width:77px"><i>0.000</i></div>
<div class="c" style="left:607px;top:587px;width:77px"><i>0.00</i></div>
<div class="c" style="left:480px;top:611px;width:48px"><i>Io</i></div>
<div class="c" style="left:529px;top:611px;width:77px"><i>0.000</i></div>
<div class="c" style="left:607px;top:611px;width:77px"><i>180.00</i></div>
<div class="c" style="left:480px;top:635px;width:48px"><i>I+</i></div>
<div class="c" style="left:529px;top:635px;width:77px"><i>0.680</i></div>
<div class="c" style="left:607px;top:635px;width:77px"><i>0.00</i></div>
<div class="c" style="left:480px;top:659px;width:48px"><i>I-</i></div>
<div class="c" style="left:529px;top:659px;width:77px"><i>0.000</i></div>
<div class="c" style="left:607px;top:659px;width:77px"><i>0.00</i></div>
<div class="c" style="left:480px;top:683px;width:48px"><i>Uab</i></div>
<div class="c" style="left:529px;top:683px;width:77px"><i>100.000</i></div>
<div class="c" style="left:607px;top:683px;width:77px"><i>30.00</i></div>
<div class="c" style="left:480px;top:707px;width:48px"><i>Ubc</i></div>
<div class="c" style="left:529px;top:707px;width:77px"><i>100.000</i></div>
<div class="c" style="left:607px;top:707px;width:77px"><i>-90.00</i></div>
<div style="left:685px;top:441px;width:17px;height:290px;background:#f0f0f0"></div>
<div style="left:686px;top:458px;width:15px;height:155px;background:#cdcdcd"></div>
<svg style="left:685px;top:441px" width="17" height="290" viewBox="0 0 17 290"><path d="M5 11.5 L8.5 8 L12 11.5" stroke="#606060" stroke-width="2" fill="none"/><path d="M5 278.5 L8.5 282 L12 278.5" stroke="#606060" stroke-width="2" fill="none"/></svg>
<div class="grid" style="left:715px;top:440px;width:293px;height:293px;"></div>
<div class="h c" style="left:716px;top:441px;width:42px;line-height:22px">参数</div>
<div class="h c" style="left:758px;top:441px;width:76px;line-height:22px">动作值</div>
<div class="h c" style="left:834px;top:441px;width:80px;line-height:22px">返回值</div>
<div class="h c" style="left:914px;top:441px;width:74px;line-height:22px">返回系数</div>
<div style="left:716px;top:462px;width:42px;height:270px;background:#ccffcc"></div>
<div style="left:759px;top:462px;width:229px;height:270px;background:#f0fff0"></div>
<div class="hl" style="left:716px;top:461px;width:272px;height:1px;"></div>
<div class="hl" style="left:716px;top:485px;width:272px;height:1px;"></div>
<div class="hl" style="left:716px;top:509px;width:272px;height:1px;"></div>
<div class="hl" style="left:716px;top:533px;width:272px;height:1px;"></div>
<div class="hl" style="left:716px;top:557px;width:272px;height:1px;"></div>
<div class="hl" style="left:716px;top:581px;width:272px;height:1px;"></div>
<div class="hl" style="left:716px;top:605px;width:272px;height:1px;"></div>
<div class="hl" style="left:716px;top:629px;width:272px;height:1px;"></div>
<div class="hl" style="left:716px;top:653px;width:272px;height:1px;"></div>
<div class="hl" style="left:716px;top:677px;width:272px;height:1px;"></div>
<div class="hl" style="left:716px;top:701px;width:272px;height:1px;"></div>
<div class="hl" style="left:716px;top:725px;width:272px;height:1px;"></div>
<div class="vl" style="left:758px;top:460px;width:1px;height:271px;"></div>
<div class="vl" style="left:834px;top:460px;width:1px;height:271px;"></div>
<div class="vl" style="left:914px;top:460px;width:1px;height:271px;"></div>
<div class="c" style="left:716px;top:467px;width:42px"><i>UA</i></div>
<div class="c" style="left:716px;top:491px;width:42px"><i>UB</i></div>
<div class="c" style="left:716px;top:515px;width:42px"><i>UC</i></div>
<div class="c" style="left:716px;top:539px;width:42px"><i>IA</i></div>
<div class="c" style="left:716px;top:563px;width:42px"><i>IB</i></div>
<div class="c" style="left:716px;top:587px;width:42px"><i>IC</i></div>
<div class="c" style="left:716px;top:611px;width:42px"><i>Ua</i></div>
<div class="c" style="left:716px;top:635px;width:42px"><i>Ub</i></div>
<div class="c" style="left:716px;top:659px;width:42px"><i>Uc</i></div>
<div class="c" style="left:716px;top:683px;width:42px"><i>Ia</i></div>
<div class="c" style="left:716px;top:707px;width:42px"><i>Ib</i></div>
<div style="left:989px;top:441px;width:17px;height:290px;background:#f0f0f0"></div>
<div style="left:990px;top:458px;width:15px;height:234px;background:#cdcdcd"></div>
<svg style="left:989px;top:441px" width="17" height="290" viewBox="0 0 17 290"><path d="M5 11.5 L8.5 8 L12 11.5" stroke="#606060" stroke-width="2" fill="none"/><path d="M5 278.5 L8.5 282 L12 278.5" stroke="#606060" stroke-width="2" fill="none"/></svg>
<div style="left:672px;top:81px;width:340px;height:338px;border:1px solid;border-color:#a0a0a0 #fff #fff #a0a0a0"></div>
<div style="left:673px;top:82px;width:338px;height:336px;border:1px solid;border-color:#696969 #e3e3e3 #e3e3e3 #696969;background:#000"></div>
<svg style="left:674px;top:83px" width="336" height="333" viewBox="674 83 336 333" font-family="Liberation Mono, monospace" font-size="12">
<circle cx="846.0" cy="250.0" r="23.5" fill="none" stroke="#565656" stroke-width="1" shape-rendering="crispEdges"/>
<circle cx="846.0" cy="250.0" r="55.5" fill="none" stroke="#565656" stroke-width="1" shape-rendering="crispEdges"/>
<circle cx="846.0" cy="250.0" r="86.5" fill="none" stroke="#565656" stroke-width="1" shape-rendering="crispEdges"/>
<circle cx="846.0" cy="250.0" r="118.5" fill="none" stroke="#565656" stroke-width="1" shape-rendering="crispEdges"/>
<circle cx="846.0" cy="250.0" r="149.5" fill="none" stroke="#565656" stroke-width="1" shape-rendering="crispEdges"/>
<path d="M698.0 250.5 L995.0 250.5" stroke="#565656" stroke-width="1" shape-rendering="crispEdges"/>
<path d="M717.9 176.2 L975.1 324.8" stroke="#565656" stroke-width="1" shape-rendering="crispEdges"/>
<path d="M772.2 121.9 L920.8 379.1" stroke="#565656" stroke-width="1" shape-rendering="crispEdges"/>
<path d="M846.5 102.0 L846.5 399.0" stroke="#565656" stroke-width="1" shape-rendering="crispEdges"/>
<path d="M920.8 121.9 L772.2 379.1" stroke="#565656" stroke-width="1" shape-rendering="crispEdges"/>
<path d="M975.1 176.2 L717.9 324.8" stroke="#565656" stroke-width="1" shape-rendering="crispEdges"/>
<path d="M846.5 250.5 L919.5 250.5 M919.5 250.5 L912.2 247.1 M919.5 250.5 L912.2 253.9" stroke="#ffff00" stroke-width="1.3" fill="none"/>
<path d="M846.5 250.5 L811.0 312.0 M811.0 312.0 L817.6 307.4 M811.0 312.0 L811.7 304.0" stroke="#00ff40" stroke-width="1.3" fill="none"/>
<path d="M846.5 250.5 L811.0 189.0 M811.0 189.0 L811.7 197.0 M811.0 189.0 L817.6 193.6" stroke="#ff0040" stroke-width="1.3" fill="none"/>
<path d="M846.5 250.5 L846.5 239.0 M846.5 239.0 L842.5 245.4 M846.5 239.0 L850.5 245.4" stroke="#00ffff" stroke-width="1.3" fill="none"/>
<path d="M846.5 250.5 L836.5 256.2 M836.5 256.2 L844.0 256.5 M836.5 256.2 L840.1 249.6" stroke="#e0a000" stroke-width="1.3" fill="none"/>
<path d="M846.5 250.5 L856.5 256.2 M856.5 256.2 L852.9 249.6 M856.5 256.2 L849.0 256.5" stroke="#ff00ff" stroke-width="1.3" fill="none"/>
<path d="M682 90.5 H712" stroke="#e0a000" stroke-width="1" fill="none"/><path d="M708 87.5 L712 90.5 L708 93.5" stroke="#e0a000" stroke-width="1" fill="none"/>
<text x="714" y="97.5" fill="#e0a000" textLength="12" lengthAdjust="spacingAndGlyphs">Ua</text>
<path d="M682 100.5 H712" stroke="#00ffff" stroke-width="1" fill="none"/><path d="M708 97.5 L712 100.5 L708 103.5" stroke="#00ffff" stroke-width="1" fill="none"/>
<text x="714" y="107.5" fill="#00ffff" textLength="12" lengthAdjust="spacingAndGlyphs">Ub</text>
<path d="M682 110.5 H712" stroke="#ff00ff" stroke-width="1" fill="none"/><path d="M708 107.5 L712 110.5 L708 113.5" stroke="#ff00ff" stroke-width="1" fill="none"/>
<text x="714" y="117.5" fill="#ff00ff" textLength="12" lengthAdjust="spacingAndGlyphs">Uc</text>
<path d="M962 90 H994" stroke="#e0a000" stroke-width="2" fill="none"/><path d="M990 87 L994 90 L990 93" stroke="#e0a000" stroke-width="1" fill="none"/>
<text x="996.5" y="97" fill="#e0a000" textLength="12" lengthAdjust="spacingAndGlyphs">Ia</text>
<path d="M962 100 H994" stroke="#00ffff" stroke-width="2" fill="none"/><path d="M990 97 L994 100 L990 103" stroke="#00ffff" stroke-width="1" fill="none"/>
<text x="996.5" y="107" fill="#00ffff" textLength="12" lengthAdjust="spacingAndGlyphs">Ib</text>
<path d="M962 110 H994" stroke="#ff00ff" stroke-width="2" fill="none"/><path d="M990 107 L994 110 L990 113" stroke="#ff00ff" stroke-width="1" fill="none"/>
<text x="996.5" y="117" fill="#ff00ff" textLength="12" lengthAdjust="spacingAndGlyphs">Ic</text>
<path d="M682 382.5 H712" stroke="#ffff00" stroke-width="1" fill="none"/><path d="M708 379.5 L712 382.5 L708 385.5" stroke="#ffff00" stroke-width="1" fill="none"/>
<text x="714" y="386.5" fill="#ffff00" textLength="12" lengthAdjust="spacingAndGlyphs">UA</text>
<path d="M682 392.5 H712" stroke="#00ff00" stroke-width="1" fill="none"/><path d="M708 389.5 L712 392.5 L708 395.5" stroke="#00ff00" stroke-width="1" fill="none"/>
<text x="714" y="396.5" fill="#00ff00" textLength="12" lengthAdjust="spacingAndGlyphs">UB</text>
<path d="M682 402.5 H712" stroke="#ff0000" stroke-width="1" fill="none"/><path d="M708 399.5 L712 402.5 L708 405.5" stroke="#ff0000" stroke-width="1" fill="none"/>
<text x="714" y="406.5" fill="#ff0000" textLength="12" lengthAdjust="spacingAndGlyphs">UC</text>
<path d="M962 382 H994" stroke="#ffff00" stroke-width="2" fill="none"/><path d="M990 379 L994 382 L990 385" stroke="#ffff00" stroke-width="1" fill="none"/>
<text x="996.5" y="386" fill="#ffff00" textLength="12" lengthAdjust="spacingAndGlyphs">IA</text>
<path d="M962 392 H994" stroke="#00ff00" stroke-width="2" fill="none"/><path d="M990 389 L994 392 L990 395" stroke="#00ff00" stroke-width="1" fill="none"/>
<text x="996.5" y="396" fill="#00ff00" textLength="12" lengthAdjust="spacingAndGlyphs">IB</text>
<path d="M962 402 H994" stroke="#ff0000" stroke-width="2" fill="none"/><path d="M990 399 L994 402 L990 405" stroke="#ff0000" stroke-width="1" fill="none"/>
<text x="996.5" y="406" fill="#ff0000" textLength="12" lengthAdjust="spacingAndGlyphs">IC</text>
</svg>
<div style="left:0px;top:742px;width:1015px;height:1px;background:#e3e3e3"></div>
<div style="left:0px;top:743px;width:1015px;height:1px;background:#fff"></div>
<div class="ui" style="left:2px;top:746px">就绪</div>
<div class="ui" style="left:559px;top:746px">运行时间</div>
<div style="left:610px;top:746px;width:66px;height:18px;border:1px solid;border-color:#a0a0a0 #fff #fff #a0a0a0"></div>
<div class="ui" style="left:612px;top:746px">0.000s</div>
<div class="ui" style="left:680px;top:746px">开关量:(红-动作，绿-返回)</div>
<div style="left:836px;top:746px;width:180px;height:18px;border:1px solid;border-color:#a0a0a0 #fff #fff #a0a0a0"></div>
<div class="ui" style="left:838px;top:747px">A</div>
<div class="dot" style="left:845.2px"></div>
<div class="ui" style="left:860px;top:747px">B</div>
<div class="dot" style="left:867px"></div>
<div class="ui" style="left:881.5px;top:747px">C</div>
<div class="dot" style="left:888.7px"></div>
<div class="ui" style="left:904px;top:747px">R</div>
<div class="dot" style="left:910.7px"></div>
<div class="ui" style="left:925.6px;top:747px">a</div>
<div class="dot" style="left:932.7px"></div>
<div class="ui" style="left:947.6px;top:747px">b</div>
<div class="dot" style="left:954.4px"></div>
<div class="ui" style="left:969.4px;top:747px">c</div>
<div class="dot" style="left:976.4px"></div>
<div class="ui" style="left:991.8px;top:747px">r</div>
<div class="dot" style="left:998.2px"></div>
<div style="left:0px;top:763px;width:1015px;height:1px;background:#5a606c"></div>
<svg style="left:0;top:0;pointer-events:none" width="1015" height="764" viewBox="0 0 1015 764"><ellipse cx="213" cy="224.2" rx="191.3" ry="43" fill="none" stroke="#fb1414" stroke-width="2.8"/><ellipse cx="217.6" cy="377.9" rx="190" ry="43.3" fill="none" stroke="#fb1414" stroke-width="2.8"/></svg>
</div></body></html>
